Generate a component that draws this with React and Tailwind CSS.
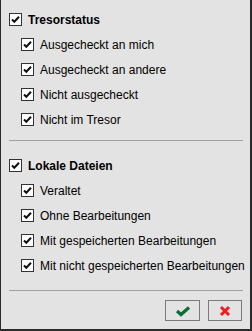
const groups = [
  {
    title: 'Tresorstatus',
    items: ['Ausgecheckt an mich', 'Ausgecheckt an andere', 'Nicht ausgecheckt', 'Nicht im Tresor'],
  },
  {
    title: 'Lokale Dateien',
    items: ['Veraltet', 'Ohne Bearbeitungen', 'Mit gespeicherten Bearbeitungen', 'Mit nicht gespeicherten Bearbeitungen'],
  },
]

function Box() {
  return (
    <span className="w-[13px] h-[13px] shrink-0 border border-[#333] bg-white flex items-center justify-center">
      <svg width="11" height="11" viewBox="0 0 11 11">
        <path d="M2 5.5 L4.3 7.8 L9 2.8" fill="none" stroke="#111" strokeWidth="2" />
      </svg>
    </span>
  )
}

function Row({ label, bold }) {
  return (
    <div className="h-[25px] flex items-center gap-[6px] whitespace-nowrap">
      <Box />
      <span className={bold ? 'font-bold text-black' : 'text-black'}>{label}</span>
    </div>
  )
}

export default function App() {
  return (
    <div
      className="w-[252px] h-[331px] bg-[#e3e3e3] border-l border-r-2 border-b-2 border-[#2b2b2b] text-[12px] leading-none flex flex-col"
      style={{ fontFamily: '"Liberation Sans", Arial, sans-serif' }}
    >
      <div className="pt-[7px] pl-[8px] pr-[7px]">
        <Row label={groups[0].title} bold />
        <div className="pl-[12px]">
          {groups[0].items.map(it => <Row key={it} label={it} />)}
        </div>
        <div className="h-px bg-[#a0a0a0] mt-[8px] mb-[12px]" />
        <Row label={groups[1].title} bold />
        <div className="pl-[12px]">
          {groups[1].items.map(it => <Row key={it} label={it} />)}
        </div>
        <div className="h-px bg-[#a0a0a0] mt-[12px]" />
      </div>
      <div className="flex justify-end gap-[8px] pr-[8px] mt-[9px]">
        <button className="w-[35px] h-[21px] border border-[#7a7a7a] bg-[#e3e3e3] flex items-center justify-center">
          <svg width="16" height="12" viewBox="0 0 16 12">
            <path d="M2 6 L6 9.5 L14 2.5" fill="none" stroke="#0f6b35" strokeWidth="3.2" />
          </svg>
        </button>
        <button className="w-[34px] h-[21px] border border-[#7a7a7a] bg-[#e3e3e3] flex items-center justify-center">
          <svg width="12" height="12" viewBox="0 0 12 12">
            <path d="M2 2 L10 10 M10 2 L2 10" stroke="#ee1c25" strokeWidth="3" />
          </svg>
        </button>
      </div>
    </div>
  )
}
